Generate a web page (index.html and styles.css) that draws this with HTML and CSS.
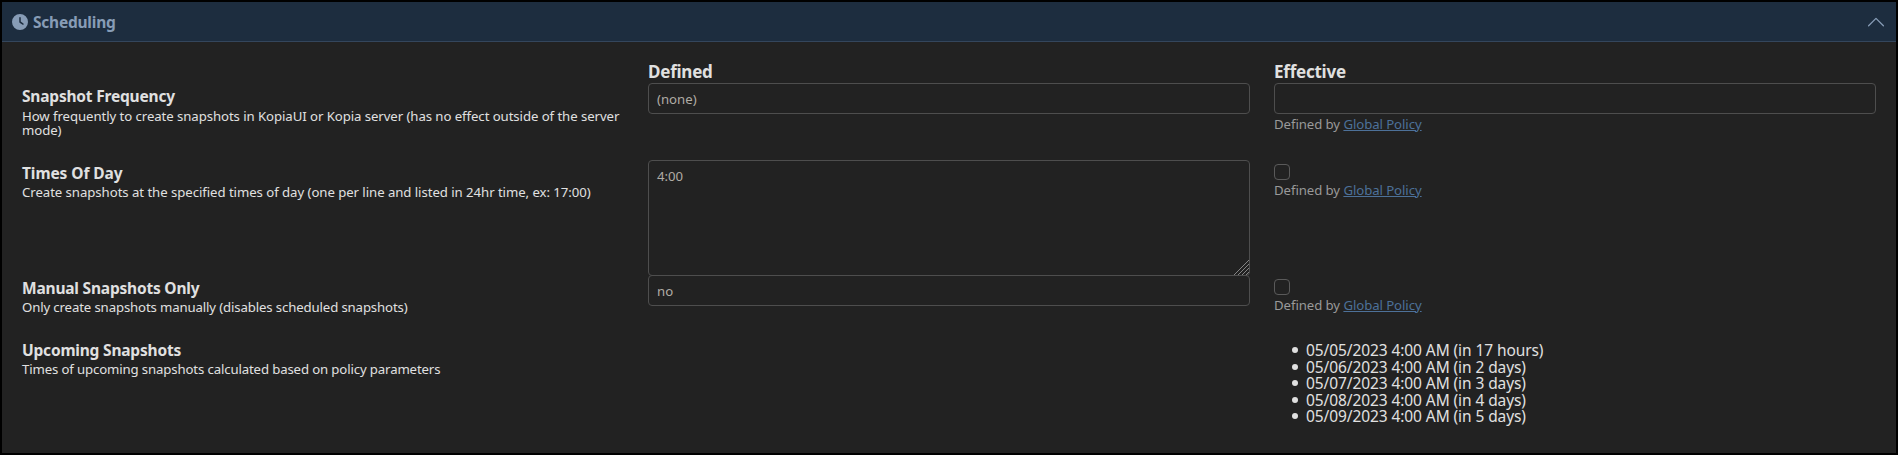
FILE: index.html
```html
<!DOCTYPE html>
<html lang="en">
<head>
<meta charset="utf-8">
<title>Scheduling</title>
<link rel="stylesheet" href="styles.css">
</head>
<body>
<section class="panel">
  <header class="panel-header">
    <svg class="clock" viewBox="0 0 512 512"><path fill="currentColor" fill-rule="evenodd" d="M256 0a256 256 0 1 1 0 512A256 256 0 1 1 256 0zM232 120V256c0 8 4 15.500 10.700 20l96 64c11 7.400 25.900 4.400 33.300-6.700s4.400-25.900-6.700-33.300L280 243.200V120c0-13.300-10.700-24-24-24s-24 10.700-24 24z"/></svg>
    <span class="panel-title">Scheduling</span>
    <svg class="chevron" viewBox="0 0 16 16"><path fill="none" stroke="currentColor" stroke-width="1.300" stroke-linecap="round" stroke-linejoin="round" d="M.6 11.800 8 4.400 15.400 11.800"/></svg>
  </header>
  <div class="grid">
    <div></div>
    <div class="column-title">Defined</div>
    <div class="column-title">Effective</div>

    <div class="label"><h3>Snapshot Frequency</h3><p>How frequently to create snapshots in KopiaUI or Kopia server (has no effect outside of the server<br>mode)</p></div>
    <div><div class="control">(none)</div></div>
    <div><div class="control"></div><div class="source">Defined by <a href="#">Global Policy</a></div></div>

    <div class="label times"><h3>Times Of Day</h3><p>Create snapshots at the specified times of day (one per line and listed in 24hr time, ex: 17:00)</p></div>
    <div class="area-wrap"><textarea class="control area">4:00</textarea><svg class="grip" viewBox="0 0 15 15"><path fill="none" stroke="#858585" d="M0 15 15 0M4 15 15 4M8 15 15 8M12 15 15 12"/></svg></div>
    <div class="toggle"><i class="checkbox"></i><div class="source">Defined by <a href="#">Global Policy</a></div></div>

    <div class="label tight"><h3>Manual Snapshots Only</h3><p>Only create snapshots manually (disables scheduled snapshots)</p></div>
    <div><div class="control">no</div></div>
    <div class="toggle"><i class="checkbox"></i><div class="source">Defined by <a href="#">Global Policy</a></div></div>

    <div class="label tight"><h3>Upcoming Snapshots</h3><p>Times of upcoming snapshots calculated based on policy parameters</p></div>
    <div></div>
    <ul class="runs">
      <li>05/05/2023 4:00 AM (in 17 hours)</li>
      <li>05/06/2023 4:00 AM (in 2 days)</li>
      <li>05/07/2023 4:00 AM (in 3 days)</li>
      <li>05/08/2023 4:00 AM (in 4 days)</li>
      <li>05/09/2023 4:00 AM (in 5 days)</li>
    </ul>
  </div>
</section>
</body>
</html>
```
FILE: styles.css
```css
* { box-sizing: border-box; }
body {
  margin: 0;
  background: #000;
  color: #e0e0e0;
  font-family: "Noto Sans", "Open Sans", sans-serif;
  font-size: 13.200px;
}
.panel {
  height: 455px;
  border: 2px solid #000;
  background: #222;
}
.panel-header {
  display: flex;
  align-items: center;
  height: 40px;
  padding: 0 12px 0 10px;
  border-bottom: 1px solid #34465c;
  background: #1d2d3f;
  color: #879cb6;
}
.clock { width: 16px; height: 16px; margin-right: 5px; }
.panel-title { font-size: 15.500px; font-weight: 700; line-height: 22px; letter-spacing: -.23px; }
.chevron { width: 16px; height: 16px; margin-left: auto; }
.grid {
  display: grid;
  grid-template-columns: 602px 602px 602px;
  grid-template-rows: 41px 77px 115px 62px 90px;
  column-gap: 24px;
  padding-left: 20px;
}
.column-title { padding-top: 18px; font-size: 17px; font-weight: 700; line-height: 24px; letter-spacing: -.23px; }
.label { padding-top: 3px; }
.label h3 { margin: 0; font-size: 15.500px; font-weight: 700; line-height: 20px; letter-spacing: -.2px; }
.label p { margin: 3px 0 0; line-height: 14px; letter-spacing: -.07px; white-space: nowrap; }
.label.times h3 { letter-spacing: -.08px; }
.label.times p { margin-top: 2px; letter-spacing: -.055px; }
.label.tight p { margin-top: 2px; letter-spacing: -.13px; }
.control {
  display: block;
  width: 602px;
  height: 31px;
  padding: 5px 8px;
  border: 1px solid #4e4e4e;
  border-radius: 4px;
  background: #222;
  color: #b0aca5;
  font: inherit;
  line-height: 21px;
}
.area-wrap { position: relative; }
.area { height: 116px; resize: none; }
.grip { position: absolute; left: 586px; top: 100px; width: 15px; height: 15px; }
.source { color: #999; line-height: 20px; letter-spacing: -.07px; }
.source a { color: #4d7199; }
.toggle { padding-top: 4px; }
.checkbox { display: block; width: 16px; height: 16px; border: 1px solid #5a5a5a; border-radius: 4px; }
.runs { margin: 5px 0 0; padding-left: 18px; list-style: none; font-size: 15.500px; line-height: 16.500px; letter-spacing: -.09px; }
.runs li { display: flex; align-items: center; gap: 8px; }
.runs li::before { content: ""; width: 6px; height: 6px; border-radius: 50%; background: currentColor; }
```
